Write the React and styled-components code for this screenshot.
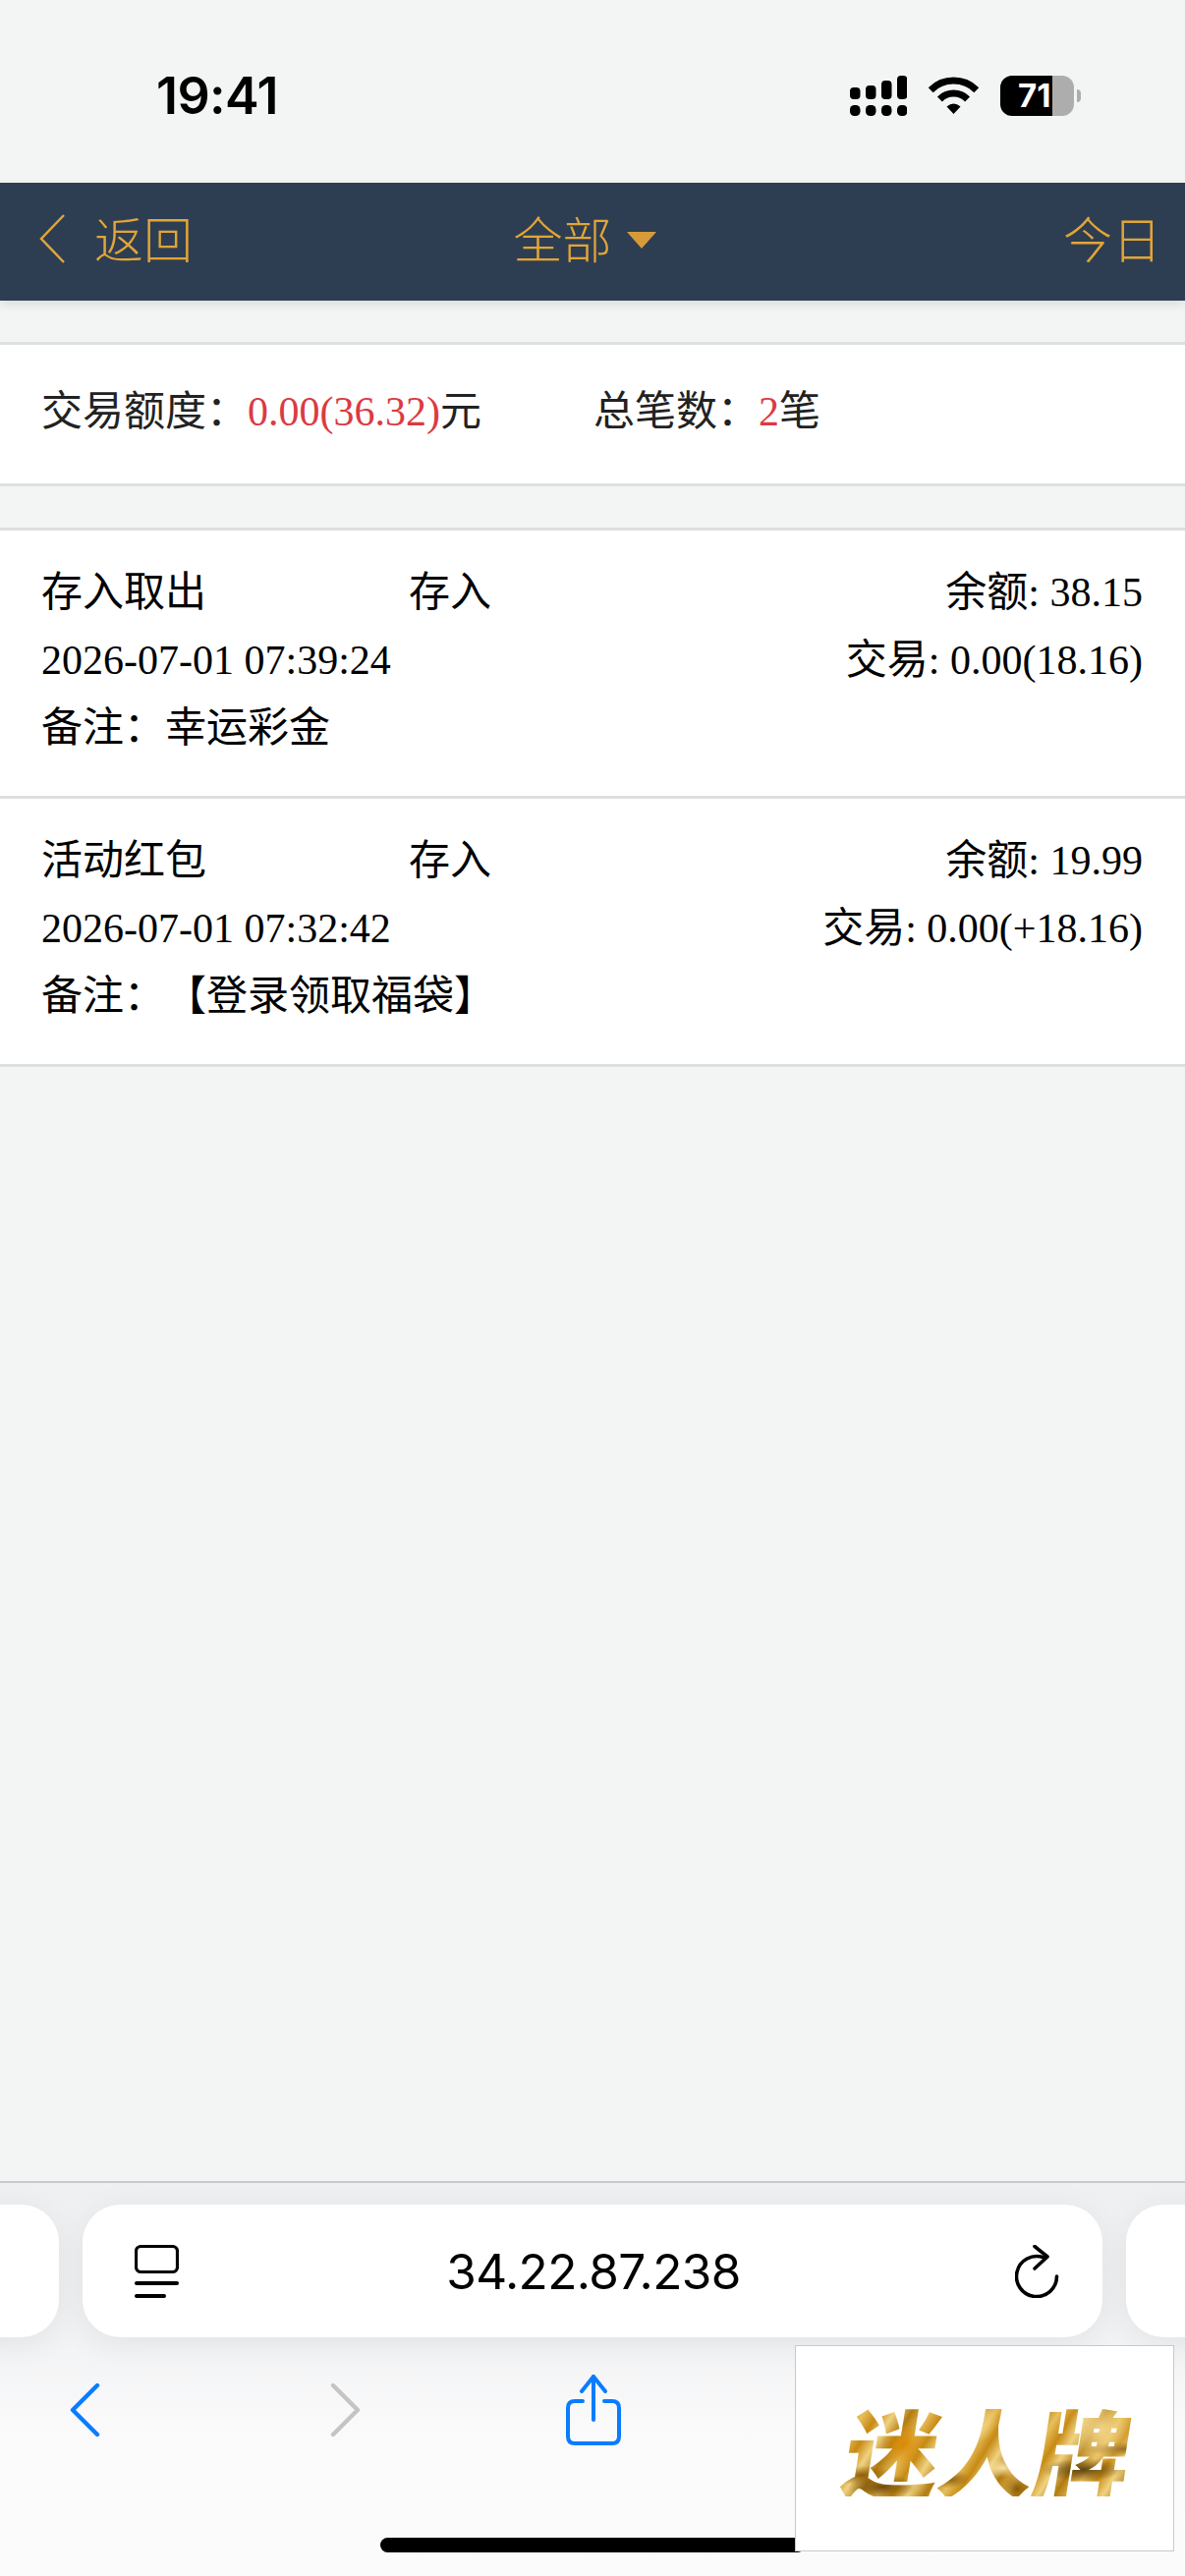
import styled, { createGlobalStyle } from 'styled-components';

const GlobalStyle = createGlobalStyle`
    * {
        box-sizing: border-box;
    }
    html,
    body {
        margin: 0;
        padding: 0;
        background: #f3f5f4;
    }
`;

const Page = styled.div`
    display: flex;
    flex-direction: column;
    height: 100vh;
    overflow: hidden;
    font-family: 'Liberation Serif', 'Noto Sans CJK SC', serif;
    font-size: 42px;
    color: #000;
    text-spacing-trim: space-all;
`;

const StatusBar = styled.div`
    display: flex;
    justify-content: space-between;
    align-items: flex-start;
    height: 186px;
    flex-shrink: 0;
    padding: 77px 113px 0 159px;
`;

const Clock = styled.span`
    font-family: Inter, 'Liberation Sans', sans-serif;
    font-size: 52px;
    font-weight: 600;
    line-height: 42px;
    letter-spacing: -0.6px;
`;

const StatusIcons = styled.div`
    display: flex;
    align-items: flex-start;
    gap: 22px;
`;

const Battery = styled.div`
    position: relative;
    width: 75px;
    height: 41px;
    border-radius: 12px;
    background: ${(p) =>
        `linear-gradient(90deg, #000 ${p.$level}%, #adadad ${p.$level}%)`};
    color: #fff;
    font-family: Inter, 'Liberation Sans', sans-serif;
    font-size: 33px;
    font-weight: 700;
    line-height: 41px;
    padding-left: 18px;

    &::after {
        content: '';
        position: absolute;
        left: 78px;
        top: 14px;
        width: 4px;
        height: 13px;
        border-radius: 0 6px 6px 0;
        background: #adadad;
    }
`;

const NavBar = styled.header`
    display: grid;
    grid-template-columns: 1fr auto 1fr;
    align-items: center;
    height: 120px;
    flex-shrink: 0;
    padding: 0 24px 10px 40px;
    background: #2e3e52;
    color: #e2a537;
    font-family: 'Noto Sans CJK SC', sans-serif;
    font-size: 50px;
    font-weight: 300;
    line-height: 110px;
    box-shadow: 0 4px 10px rgba(0, 0, 0, 0.1);
`;

const NavBack = styled.div`
    display: flex;
    align-items: center;
    gap: 30px;

    svg {
        margin-top: 4px;
    }
`;

const NavTitle = styled.div`
    display: flex;
    align-items: center;
    gap: 15px;
    margin-right: 32px;
`;

const Caret = styled.span`
    width: 0;
    height: 0;
    margin-top: 6px;
    border-left: 15px solid transparent;
    border-right: 15px solid transparent;
    border-top: 17px solid #d69b38;
`;

const NavRight = styled.div`
    justify-self: end;
`;

const Panel = styled.section`
    margin-top: ${(p) => p.$top}px;
    background: #fff;
    border-top: 3px solid #dedfdf;
    flex-shrink: 0;
`;

const SummaryRow = styled.div`
    display: flex;
    align-items: center;
    height: 144px;
    padding: 0 0 6px 42px;
    border-bottom: 3px solid #dedfdf;
    color: #222;
    line-height: 68px;
`;

const SummaryItem = styled.div`
    width: ${(p) => p.$width}px;
`;

const Red = styled.span`
    color: #dc3a42;
`;

const Record = styled.article`
    display: grid;
    grid-template-columns: 374px 1fr auto;
    grid-auto-rows: 69px;
    line-height: 69px;
    height: 273px;
    padding: 29px 43px 0 42px;
    border-bottom: 3px solid #dedfdf;
`;

const Type = styled.span`
    grid-column: 2;
`;

const Amount = styled.span`
    grid-column: 3;
    text-align: right;
`;

const Stamp = styled.span`
    grid-column: 1 / 3;
`;

const Note = styled.span`
    grid-column: 1 / -1;
`;

const Toolbar = styled.footer`
    position: relative;
    margin-top: auto;
    height: 402px;
    flex-shrink: 0;
    padding-top: 22px;
    overflow: hidden;
    border-top: 2px solid #c6c8cb;
    background: linear-gradient(#eff0f1 0, #f2f3f4 40%, #fafafb 62%, #fbfbfc 100%);
`;

const TabStrip = styled.div`
    display: flex;
    justify-content: center;
    gap: 24px;
`;

const AddressPill = styled.div`
    display: flex;
    align-items: center;
    justify-content: space-between;
    flex-shrink: 0;
    width: 1038px;
    height: 135px;
    padding: 0 43px 0 53px;
    border-radius: 38px;
    background: #fff;
    box-shadow: 0 6px 34px rgba(0, 0, 0, 0.07);
`;

const Address = styled.span`
    font-family: Inter, 'Liberation Sans', sans-serif;
    font-size: 49.5px;
    font-weight: 400;
    letter-spacing: -0.6px;
    margin-left: -7px;
`;

const NavIcons = styled.div`
    display: flex;
    align-items: center;
    gap: ${(p) => p.$gap}px;
    margin-top: 38px;
    padding-left: 71px;
`;

const ShareButton = styled.span`
    display: flex;
    margin-left: -25px;
`;

const HomeBar = styled.div`
    position: absolute;
    left: 387px;
    bottom: 24px;
    width: 432px;
    height: 15px;
    border-radius: 8px;
    background: #000;
`;

const AdBox = styled.aside`
    position: absolute;
    left: 809px;
    top: 165px;
    width: 386px;
    height: 210px;
    display: flex;
    align-items: center;
    justify-content: center;
    padding-left: 8px;
    background: #fff;
    border: 1px solid #c9c9c9;
`;

// gold foil look: dark and bright patches stacked over a banded base
const BrandMark = styled.span`
    font-family: 'Noto Sans CJK SC', sans-serif;
    font-size: 97px;
    font-weight: 900;
    line-height: 1;
    white-space: nowrap;
    color: transparent;
    transform: skewX(-9deg);
    background:
        radial-gradient(ellipse at 7% 78%, #8f5f08 0, transparent 9%),
        radial-gradient(circle at 20% 45%, #d98a06 0, transparent 10%),
        radial-gradient(ellipse at 15% 90%, #6f4a0a 0, transparent 10%),
        radial-gradient(circle at 44% 22%, #f6dc8e 0, transparent 12%),
        radial-gradient(ellipse at 38% 82%, #8b5c08 0, transparent 8%),
        radial-gradient(ellipse at 56% 70%, #f7e2a4 0, transparent 10%),
        radial-gradient(circle at 62% 92%, #8a5a08 0, transparent 8%),
        radial-gradient(circle at 88% 30%, #f2d589 0, transparent 14%),
        radial-gradient(ellipse at 84% 72%, #5f4310 0, transparent 12%),
        radial-gradient(ellipse at 96% 50%, #8d6214 0, transparent 10%),
        repeating-linear-gradient(115deg, #b57d10 0, #e8bf5c 16px, #c68a14 30px, #f0d280 44px, #ae7a12 60px);
    -webkit-background-clip: text;
    background-clip: text;
`;

const records = [
    {
        title: '存入取出',
        balance: '38.15',
        time: '2026-07-01 07:39:24',
        trade: '0.00(18.16)',
        note: '备注：幸运彩金',
    },
    {
        title: '活动红包',
        balance: '19.99',
        time: '2026-07-01 07:32:42',
        trade: '0.00(+18.16)',
        note: '备注：【登录领取福袋】',
    },
];

function SignalIcon() {
    const bars = [
        [0, 12, 12],
        [16, 10, 14],
        [32, 5, 19],
        [48, 0, 24],
    ];
    return (
        <svg width="58" height="41" viewBox="0 0 58 41">
            {bars.map(([x, y, h]) => (
                <g key={x}>
                    <rect x={x} y={y} width="10.5" height={h} rx="4" />
                    <rect x={x} y="30" width="10.5" height="11" rx="4.5" />
                </g>
            ))}
        </svg>
    );
}

function WifiIcon() {
    return (
        <svg
            width="51"
            height="38"
            viewBox="0 0 51 38"
            style={{ marginTop: 1 }}
        >
            <path
                d="M2.2 13.7A33 33 0 0 1 48.8 13.7"
                fill="none"
                stroke="#000"
                strokeWidth="7"
            />
            <path
                d="M11.4 22.9A20 20 0 0 1 39.6 22.9"
                fill="none"
                stroke="#000"
                strokeWidth="7"
            />
            <path d="M25.5 38L18.5 30.5Q25.5 24.5 32.5 30.5Z" />
        </svg>
    );
}

function BackChevron() {
    return (
        <svg width="26" height="50" viewBox="0 0 26 50">
            <path
                d="M25 1L2 25L25 49"
                fill="none"
                stroke="#e2a537"
                strokeWidth="2.5"
            />
        </svg>
    );
}

function TabsIcon() {
    return (
        <svg
            width="45"
            height="54"
            viewBox="0 0 45 54"
            fill="none"
            stroke="#000"
            strokeLinecap="round"
        >
            <rect x="1.5" y="1.5" width="42" height="26" rx="5" strokeWidth="3.2" />
            <path d="M2 39H43" strokeWidth="4" />
            <path d="M2 52H30" strokeWidth="4" />
        </svg>
    );
}

function ReloadIcon() {
    return (
        <svg
            width="46"
            height="54"
            viewBox="0 0 46 54"
            fill="none"
            stroke="#000"
            strokeWidth="3.6"
            strokeLinecap="round"
            strokeLinejoin="round"
        >
            <path d="M29 12.8A20.5 20.5 0 1 0 42.5 32" />
            <path d="M20 1.5L33 12L20 24" />
        </svg>
    );
}

function ArrowIcon({ color, flip }) {
    return (
        <svg
            width="31"
            height="56"
            viewBox="0 0 31 56"
            fill="none"
            stroke={color}
            strokeWidth="4.4"
            strokeLinecap="round"
            strokeLinejoin="round"
            style={flip ? { transform: 'scaleX(-1)' } : undefined}
        >
            <path d="M28 3L3 28L28 53" />
        </svg>
    );
}

function ShareIcon() {
    return (
        <svg
            width="56"
            height="72"
            viewBox="0 0 56 72"
            fill="none"
            stroke="#0a7cff"
            strokeWidth="4"
            strokeLinecap="round"
            strokeLinejoin="round"
        >
            <path d="M17 27H9Q2 27 2 34V63Q2 70 9 70H47Q54 70 54 63V34Q54 27 47 27H39" />
            <path d="M28 2V46" />
            <path d="M16 17L28 2L40 17" />
        </svg>
    );
}

function App() {
    return (
        <Page>
            <GlobalStyle />
            <StatusBar>
                <Clock>19:41</Clock>
                <StatusIcons>
                    <SignalIcon />
                    <WifiIcon />
                    <Battery $level={71}>71</Battery>
                </StatusIcons>
            </StatusBar>

            <NavBar>
                <NavBack>
                    <BackChevron />
                    <span>返回</span>
                </NavBack>
                <NavTitle>
                    <span>全部</span>
                    <Caret />
                </NavTitle>
                <NavRight>今日</NavRight>
            </NavBar>

            <Panel $top={42}>
                <SummaryRow>
                    <SummaryItem $width={562}>
                        交易额度：<Red>0.00(36.32)</Red>元
                    </SummaryItem>
                    <SummaryItem>
                        总笔数：<Red>2</Red>笔
                    </SummaryItem>
                </SummaryRow>
            </Panel>

            <Panel $top={42}>
                {records.map((r) => (
                    <Record key={r.time}>
                        <span>{r.title}</span>
                        <Type>存入</Type>
                        <Amount>余额: {r.balance}</Amount>
                        <Stamp>{r.time}</Stamp>
                        <Amount>交易: {r.trade}</Amount>
                        <Note>{r.note}</Note>
                    </Record>
                ))}
            </Panel>

            <Toolbar>
                <TabStrip>
                    <AddressPill />
                    <AddressPill>
                        <TabsIcon />
                        <Address>34.22.87.238</Address>
                        <ReloadIcon />
                    </AddressPill>
                    <AddressPill />
                </TabStrip>
                <NavIcons $gap={234}>
                    <ArrowIcon color="#0a7cff" />
                    <ArrowIcon color="#c4c4c4" flip />
                    <ShareButton>
                        <ShareIcon />
                    </ShareButton>
                </NavIcons>
                <HomeBar />
                <AdBox>
                    <BrandMark>迷人牌</BrandMark>
                </AdBox>
            </Toolbar>
        </Page>
    );
}

export default App;
